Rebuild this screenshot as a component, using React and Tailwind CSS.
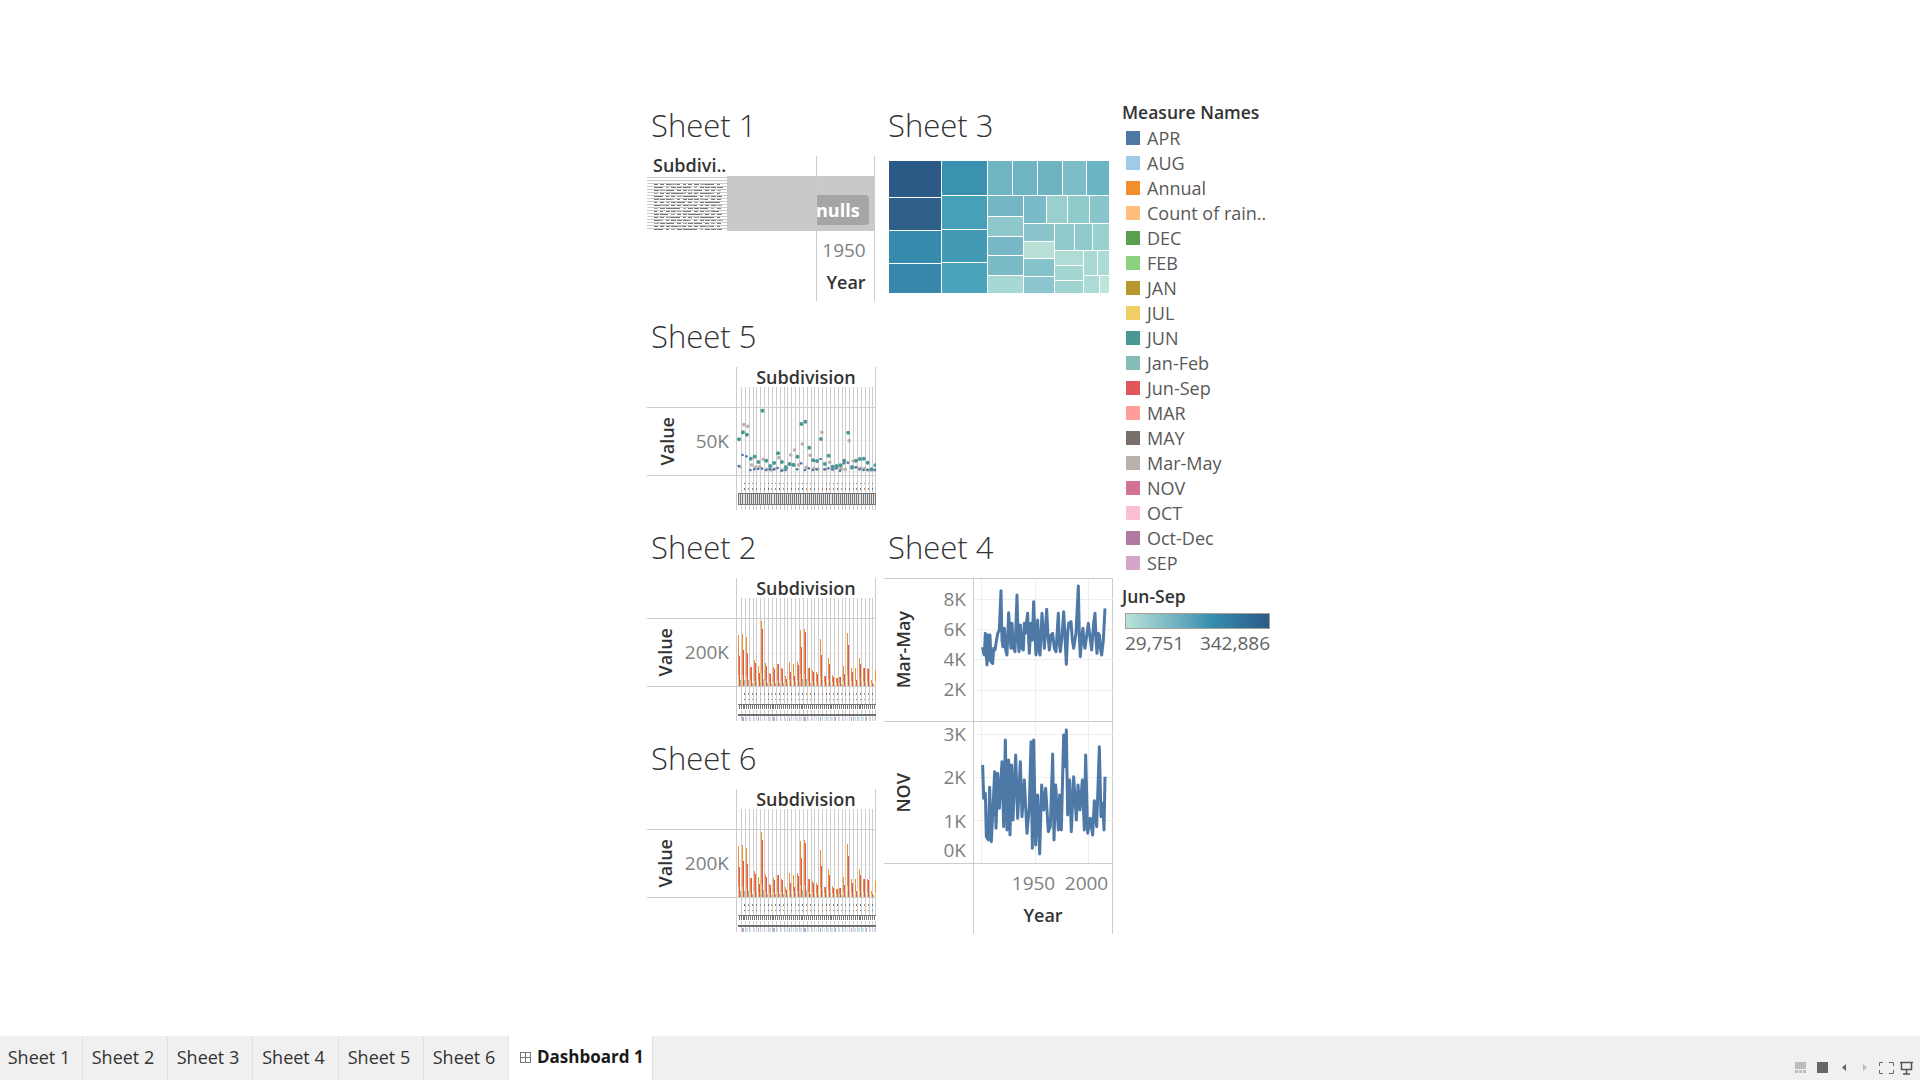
const legendItems = [
  ['APR', 'bg-[#4e79a7]'],
  ['AUG', 'bg-[#a0cbe8]'],
  ['Annual', 'bg-[#f28e2b]'],
  ['Count of rain..', 'bg-[#ffbe7d]'],
  ['DEC', 'bg-[#59a14f]'],
  ['FEB', 'bg-[#8cd17d]'],
  ['JAN', 'bg-[#b6992d]'],
  ['JUL', 'bg-[#f1ce63]'],
  ['JUN', 'bg-[#499894]'],
  ['Jan-Feb', 'bg-[#86bcb6]'],
  ['Jun-Sep', 'bg-[#e15759]'],
  ['MAR', 'bg-[#ff9d9a]'],
  ['MAY', 'bg-[#79706e]'],
  ['Mar-May', 'bg-[#bab0ac]'],
  ['NOV', 'bg-[#d37295]'],
  ['OCT', 'bg-[#fabfd2]'],
  ['Oct-Dec', 'bg-[#b07aa1]'],
  ['SEP', 'bg-[#d4a6c8]'],
]

// treemap cells, measured on a 3x crop: x1, y1, x2, y2, colour
const treemap = [
  [27, 213, 183, 321, '#2c5a87'], [27, 324, 183, 420, '#2e6089'], [27, 423, 183, 519, '#348bae'], [27, 522, 183, 608, '#3886a9'],
  [186, 213, 321, 315, '#3a92b1'], [186, 318, 321, 417, '#46a0b8'], [186, 420, 321, 516, '#429ab5'], [186, 519, 321, 608, '#49a3ba'],
  [324, 213, 396, 315, '#70b5c2'], [399, 213, 471, 315, '#6fb4c1'], [474, 213, 546, 315, '#6db3c1'], [549, 213, 618, 315, '#7cbdc7'], [621, 213, 687, 315, '#6ab5c3'],
  [324, 318, 429, 378, '#74b6c4'], [324, 381, 429, 438, '#8ec7cc'], [324, 441, 429, 495, '#76b8c5'], [324, 498, 429, 555, '#7bbbc6'], [324, 558, 429, 608, '#a6d9d3'],
  [432, 318, 498, 399, '#7abbc7'], [501, 318, 561, 399, '#99d0ce'], [564, 318, 627, 399, '#90cbcc'], [630, 318, 687, 399, '#8ac5cb'],
  [432, 402, 522, 453, '#8ac5cb'], [432, 456, 522, 504, '#b8e0d6'], [432, 507, 522, 558, '#85c2ca'], [432, 561, 522, 608, '#8bc5ce'],
  [525, 402, 582, 480, '#90cacd'], [585, 402, 636, 480, '#90cacd'], [639, 402, 687, 480, '#9ad0ce'],
  [525, 483, 609, 525, '#b0dcd6'], [525, 528, 609, 570, '#a5d7d2'], [525, 573, 609, 608, '#9fd4d1'],
  [612, 483, 651, 555, '#a8d9d3'], [654, 483, 687, 555, '#acdbd5'], [612, 558, 657, 608, '#aadbd4'], [660, 558, 687, 608, '#bee5da'],
]

const annualTops = [345, 342, 350, 440, 420, 438, 303, 430, 460, 440, 432, 445, 468, 425, 433, 425, 330, 327, 445, 450, 457, 357, 468, 415, 465, 473, 472, 438, 340, 445, 445, 415, 444, 445, 480, 450]
const junSepTops = [408, 390, 400, 440, 430, 460, 327, 437, 463, 447, 432, 447, 478, 455, 468, 435, 380, 336, 445, 457, 462, 405, 468, 432, 470, 475, 472, 462, 375, 457, 480, 432, 444, 447, 490, 456]

const junDots = [388, 367, 374, 446, 440, 456, 302, 452, 468, 459, 430, 456, 472, 463, 465, 440, 342, 335, 413, 451, 453, 387, 462, 437, 470, 468, 466, 452, 368, 471, 452, 447, 446, 458, 478, 466]
const marMayDots = [470, 344, 349, 465, 472, 470, 448, 478, 480, 477, 443, 480, 477, 435, 420, 465, 402, 472, 436, 476, 477, 367, 478, 457, 478, 472, 475, 478, 392, 453, 472, 475, 476, 480, 479, 480]
const aprDots = [468, 435, 439, 480, 478, 477, 476, 480, 478, 478, 474, 482, 480, 460, 463, 478, 460, 480, 475, 480, 478, 447, 478, 475, 478, 475, 482, 460, 458, 475, 472, 478, 480, 480, 480, 480]

const marMayLine = '305,232 308,250 310,255 313,190 316,255 318,285 321,195 324,270 327,195 330,275 335,280 338,235 342,240 350,190 355,180 360,62 363,210 366,230 370,175 374,240 378,255 383,128 387,200 390,235 393,160 397,230 402,245 405,160 408,75 411,200 414,245 418,165 423,235 427,240 430,160 433,190 436,160 440,130 443,210 445,250 450,160 454,210 458,95 462,200 465,255 470,150 474,240 477,255 483,130 487,190 490,235 497,118 501,200 505,240 510,195 515,190 520,235 525,245 532,130 535,220 538,245 543,200 548,125 552,200 556,283 560,190 563,160 570,155 574,210 578,235 585,190 592,48 595,200 598,260 602,200 606,175 609,220 612,235 618,190 622,160 627,200 632,240 638,160 642,130 645,210 648,250 652,190 655,195 659,240 662,255 667,210 672,115'

const novLine = '305,105 308,205 313,190 316,320 322,330 326,172 331,335 336,235 341,125 345,295 350,130 355,235 363,95 368,290 373,30 378,300 383,90 387,315 392,105 396,270 404,75 410,265 418,95 423,260 430,150 438,310 445,230 450,35 454,355 458,30 464,345 470,195 476,372 482,165 488,240 494,175 502,305 508,290 515,72 519,330 524,165 532,300 536,195 541,300 548,15 552,110 556,0 560,255 566,150 571,305 578,140 586,270 591,165 597,240 604,150 610,300 614,75 620,310 628,265 635,315 640,212 647,290 655,50 660,260 665,220 669,300 672,140'

const lineX = (i) => 300 + i * 11.6
const subdivisions = Array.from({ length: 35 }, (_, i) => i)

function SubdivisionGrid({ top }) {
  return (
    <g shapeRendering="crispEdges">
      {subdivisions.map((i) => (
        <rect key={i} x={lineX(i)} y={top} width="3" height="372" fill="#cccccc" />
      ))}
    </g>
  )
}

function SquashedLabels({ rows, band, rule, pale, dark }) {
  return (
    <g shapeRendering="crispEdges">
      {rows.map((y) =>
        annualTops.map((_, i) => (
          <rect key={`${y}-${i}`} x={310 + i * 11.6} y={y} width="3" height="4" fill={i % 3 === 0 ? '#4e79a7' : i % 3 === 1 ? '#e08a4a' : '#8a8a8a'} />
        )),
      )}
      <rect x="291" y={band[0]} width="414" height={band[1]} fill={dark ? '#777777' : '#ffffff'} />
      {!dark && <rect x="291" y={band[0]} width="414" height="3" fill="#777777" />}
      {Array.from({ length: 71 }, (_, i) => (
        <rect key={i} x={293 + i * 5.8} y={band[0] + 4} width="3" height={band[1] - 8} fill={dark ? '#e4e4e4' : '#777777'} />
      ))}
      {rule && <rect x="291" y={rule} width="414" height="4" fill="#6f6f6f" />}
      {pale &&
        annualTops.map((_, i) => (
          <rect key={i} x={304 + i * 11.6} y={pale} width="4" height="12" fill={i % 4 === 0 ? '#b9a6d0' : '#cfe4f2'} />
        ))}
    </g>
  )
}

function BarPlot() {
  return (
    <svg width="139" height="123" viewBox="288 234 417 369" className="block">
      <rect x="288" y="400" width="417" height="2" fill="#eeeeee" />
      <SubdivisionGrid top={234} />
      <g shapeRendering="crispEdges">
        {annualTops.map((t, i) => {
          const x = 291 + i * 11.7
          const h = 498 - t
          return (
            <g key={i}>
              <rect x={x} y={t} width="3" height={h} fill="#f28e2b" />
              <rect x={x + 3} y={junSepTops[i]} width="3" height={498 - junSepTops[i]} fill="#e15759" />
              <rect x={x} y={498 - h * 0.17 - 6} width="3" height={h * 0.17 + 6} fill="#f1ce63" />
              <rect x={x + 6} y={498 - h * 0.1 - 3} width="3" height={h * 0.1 + 3} fill="#bab0ac" />
            </g>
          )
        })}
        <rect x="288" y="294" width="417" height="3" fill="#cccccc" />
        <rect x="288" y="498" width="417" height="3" fill="#cccccc" />
      </g>
      <SquashedLabels rows={[520, 536]} band={[551, 20]} rule={583} pale={590} />
    </svg>
  )
}

function DotPlot() {
  return (
    <svg width="139" height="123" viewBox="288 231 417 369" className="block">
      <rect x="288" y="390" width="417" height="2" fill="#eeeeee" />
      <rect x="288" y="485" width="417" height="2" fill="#dddddd" />
      <SubdivisionGrid top={231} />
      <g shapeRendering="crispEdges">
        <rect x="288" y="291" width="417" height="3" fill="#cccccc" />
        <rect x="288" y="495" width="417" height="3" fill="#cccccc" />
      </g>
      {annualTops.map((_, i) => {
        const x = 294 + i * 11.7
        return (
          <g key={i}>
            <circle cx={x + 3} cy={marMayDots[i]} r="5.5" fill="#bab0ac" />
            <circle cx={x - 1} cy={aprDots[i]} r="4" fill="#4e79a7" />
            <circle cx={x} cy={junDots[i]} r="6" fill="#499894" />
          </g>
        )
      })}
      <SquashedLabels rows={[518, 535]} band={[549, 37]} dark />
    </svg>
  )
}

function BarSheetChart({ tick, children }) {
  return (
    <div className="flex h-[143px] w-[229px]">
      <div className="w-[89px] pt-[40px]">
        <div className="flex h-[69px] items-center justify-between border-y border-[#cccccc] pr-[7px]">
          <div className="flex w-[40px] justify-center">
            <span className="rotate-180 text-[18px] font-semibold text-[#333333] [writing-mode:vertical-rl]">Value</span>
          </div>
          <span className="text-[19px] text-[#808080]">{tick}</span>
        </div>
      </div>
      <div className="w-[140px] border-x border-[#cccccc]">
        <div className="h-[20px] text-center text-[18px] leading-[20px] font-semibold text-[#333333]">Subdivision</div>
        {children}
      </div>
    </div>
  )
}

function StripedRows() {
  return (
    <svg width="80" height="55" viewBox="0 0 240 165" className="block">
      <rect width="240" height="165" fill="#ffffff" />
      <g shapeRendering="crispEdges">
        {Array.from({ length: 18 }, (_, r) => (
          <g key={r}>
            <rect x="0" y={r * 9 + 3} width="240" height="3" fill="#c9c9c9" />
            {Array.from({ length: 12 }, (_, c) => {
              const w = 8 + ((r * 7 + c * 13) % 11)
              return r > 1 ? (
                <rect key={c} x={22 + c * 17} y={r * 9 + 6} width={w} height="3" fill={(r + c) % 5 === 0 ? '#a0a4ac' : '#77787e'} />
              ) : null
            })}
          </g>
        ))}
      </g>
    </svg>
  )
}

function Sheet({ title, children, className = '' }) {
  return (
    <div className={className}>
      <h2 className="mb-[9px] h-[42px] pl-[4px] text-[31px] leading-[40px] font-light text-[#333333]">{title}</h2>
      {children}
    </div>
  )
}

function Sheet1Chart() {
  return (
    <div className="flex h-[145px] w-[229px]">
      <div className="w-[169px]">
        <div className="h-[20px] pl-[6px] text-[18px] leading-[18px] font-semibold text-[#333333]">Subdivi..</div>
        <div className="flex h-[55px] bg-[#c9c9c9]">
          <StripedRows />
        </div>
      </div>
      <div className="w-[59px] border-x border-[#cccccc]">
        <div className="h-[20px]" />
        <div className="flex h-[55px] items-end bg-[#c9c9c9] pr-[5px] pb-[6px]">
          <div className="flex h-[30px] w-full items-center overflow-hidden rounded-r-[4px] bg-[#a5a5a5] text-[18px] font-bold text-white">
            <span className="-ml-[1px]">nulls</span>
          </div>
        </div>
        <div className="pt-[7px] pr-[3px] text-center text-[19px] leading-[24px] text-[#808080]">1950</div>
        <div className="pt-[8px] pl-[1px] text-center text-[18px] leading-[24px] font-semibold text-[#333333]">Year</div>
      </div>
    </div>
  )
}

function Treemap() {
  return (
    <svg width="220" height="132" viewBox="27 213 660 396" className="mt-[14px] ml-[5px] block">
      {treemap.map(([x1, y1, x2, y2, fill]) => (
        <rect key={`${x1}-${y1}`} x={x1} y={y1} width={x2 - x1} height={y2 - y1} fill={fill} shapeRendering="crispEdges" />
      ))}
    </svg>
  )
}

function LinePane({ viewBox, height, grid, points }) {
  return (
    <svg width="139" height={height} viewBox={viewBox} className="block">
      <g shapeRendering="crispEdges" fill="#eeeeee">
        {[300, 462, 621].map((x) => (
          <rect key={x} x={x} y="-30" width="3" height="480" />
        ))}
        {grid.map((y) => (
          <rect key={y} x="279" y={y} width="420" height="3" />
        ))}
      </g>
      <polyline points={points} fill="none" stroke="#4e79a7" strokeWidth="9" strokeLinejoin="round" />
    </svg>
  )
}

function RotatedTitle({ children }) {
  return (
    <div className="flex w-[38px] shrink-0 items-center justify-center">
      <span className="rotate-180 text-[18px] font-semibold text-[#333333] [writing-mode:vertical-rl]">{children}</span>
    </div>
  )
}

function Sheet4Chart() {
  return (
    <div className="w-[229px]">
      <div className="flex h-[144px] border-y border-[#cccccc]">
        <div className="flex w-[89px]">
          <RotatedTitle>Mar-May</RotatedTitle>
          <div className="w-[44px] pt-[5px] text-right text-[19px] leading-[30px] text-[#808080]">
            <div>8K</div>
            <div>6K</div>
            <div>4K</div>
            <div>2K</div>
          </div>
        </div>
        <div className="w-[140px] border-x border-[#cccccc]">
          <LinePane viewBox="279 27 417 426" height="142" grid={[87, 177, 268, 360]} points={marMayLine} />
        </div>
      </div>
      <div className="flex h-[142px] border-b border-[#cccccc]">
        <div className="flex w-[89px]">
          <RotatedTitle>NOV</RotatedTitle>
          <div className="w-[44px] pt-[2px] text-right text-[19px] leading-[20px] text-[#808080]">
            <div>3K</div>
            <div className="mt-[23px]">2K</div>
            <div className="mt-[24px]">1K</div>
            <div className="mt-[9px]">0K</div>
          </div>
        </div>
        <div className="w-[140px] border-x border-[#cccccc]">
          <LinePane viewBox="279 -24 417 423" height="141" grid={[12, 140, 269]} points={novLine} />
        </div>
      </div>
      <div className="flex h-[70px]">
        <div className="w-[89px]" />
        <div className="w-[140px] border-x border-[#cccccc]">
          <div className="ml-[33px] flex pt-[7px] text-[19px] leading-[24px] text-[#808080]">
            <span className="w-[53px] shrink-0 text-center">1950</span>
            <span className="w-[53px] shrink-0 text-center">2000</span>
          </div>
          <div className="pt-[8px] text-center text-[18px] leading-[24px] font-semibold text-[#333333]">Year</div>
        </div>
      </div>
    </div>
  )
}

function Legend() {
  return (
    <div className="-mt-[5px] pl-[2px]">
      <div className="h-[26px] text-[17.5px] leading-[25px] font-semibold text-[#333333]">Measure Names</div>
      <ul className="pl-[4px]">
        {legendItems.map(([name, color]) => (
          <li key={name} className="flex h-[25px] items-center gap-[7px]">
            <span className={`-mt-[2px] h-[14px] w-[14px] shrink-0 ${color}`} />
            <span className="text-[18px] whitespace-nowrap text-[#595959]">{name}</span>
          </li>
        ))}
      </ul>
      <div className="mt-[8px] h-[29px] text-[17.5px] leading-[24px] font-semibold text-[#333333]">Jun-Sep</div>
      <div className="ml-[3px] h-[16px] w-[145px] border border-[#a89f91] bg-gradient-to-r from-[#b9e3d8] via-[#358eaf] via-60% to-[#2c5a87]" />
      <div className="ml-[3px] flex w-[145px] justify-between text-[19px] leading-[28px] text-[#5f6468]">
        <span>29,751</span>
        <span>342,886</span>
      </div>
    </div>
  )
}

function ToolbarIcons() {
  return (
    <div className="flex items-center pt-[19px] pr-[6px]">
      <svg width="119" height="16" viewBox="0 0 119 16">
        <g shapeRendering="crispEdges">
          <rect x="0" y="2" width="11" height="7" fill="#bdbdbd" />
          <rect x="0" y="10" width="3" height="3" fill="#bdbdbd" />
          <rect x="4" y="10" width="3" height="3" fill="#bdbdbd" />
          <rect x="8" y="10" width="3" height="3" fill="#bdbdbd" />
          <rect x="22" y="2" width="11" height="11" fill="#666666" />
        </g>
        <path d="M51 4v7l-4-3.500z" fill="#666666" />
        <path d="M68 4v7l4-3.500z" fill="#bdbdbd" />
        <path d="M84.500 6V2.500H88M94 2.500h4.500V6M98.500 10v3.500H94M88 13.500h-3.500V10" fill="none" stroke="#666666" />
        <path d="M105 2.500h13M106.500 3v6.500h10V3M111.500 9.500v4M108 14h7" fill="none" stroke="#555555" strokeWidth="1.500" />
      </svg>
    </div>
  )
}

function TabBar() {
  const tabs = [
    ['Sheet 1', 'w-[83px]'],
    ['Sheet 2', 'w-[85px]'],
    ['Sheet 3', 'w-[85px]'],
    ['Sheet 4', 'w-[86px]'],
    ['Sheet 5', 'w-[85px]'],
    ['Sheet 6', 'w-[85px]'],
  ]
  return (
    <div className="flex h-[44px] shrink-0 justify-between bg-[#f0f0f0]">
      <div className="flex">
        {tabs.map(([name, width]) => (
          <div key={name} className={`flex items-center justify-center border-r border-[#e2e2e2] pr-[4px] pb-[2px] text-[18px] text-[#333333] ${width}`}>
            {name}
          </div>
        ))}
        <div className="flex w-[144px] items-center gap-[6px] border-r border-[#e2e2e2] bg-white pb-[2px] pl-[11px]">
          <svg width="11" height="11" viewBox="0 0 11 11" shapeRendering="crispEdges" className="shrink-0">
            <path d="M0.500 0.500h10v10h-10zM5.500 0.500v10M0.500 5.500h10" fill="none" stroke="#777777" />
          </svg>
          <span className="text-[17px] font-bold whitespace-nowrap text-[#1a1a1a]">Dashboard 1</span>
        </div>
      </div>
      <ToolbarIcons />
    </div>
  )
}

export default function App() {
  return (
    <div className="flex h-screen flex-col overflow-hidden bg-white font-['Open_Sans',sans-serif]">
      <div className="flex-1 pt-[105px] pl-[647px]">
        <div className="grid grid-cols-[237px_236px_170px] grid-rows-[repeat(4,211px)]">
          <Sheet title="Sheet 1">
            <Sheet1Chart />
          </Sheet>
          <Sheet title="Sheet 3">
            <Treemap />
          </Sheet>
          <div className="row-span-4">
            <Legend />
          </div>
          <Sheet title="Sheet 5">
            <BarSheetChart tick="50K">
              <DotPlot />
            </BarSheetChart>
          </Sheet>
          <div />
          <Sheet title="Sheet 2">
            <BarSheetChart tick="200K">
              <BarPlot />
            </BarSheetChart>
          </Sheet>
          <Sheet title="Sheet 4" className="row-span-2">
            <Sheet4Chart />
          </Sheet>
          <Sheet title="Sheet 6">
            <BarSheetChart tick="200K">
              <BarPlot />
            </BarSheetChart>
          </Sheet>
        </div>
      </div>
      <TabBar />
    </div>
  )
}
